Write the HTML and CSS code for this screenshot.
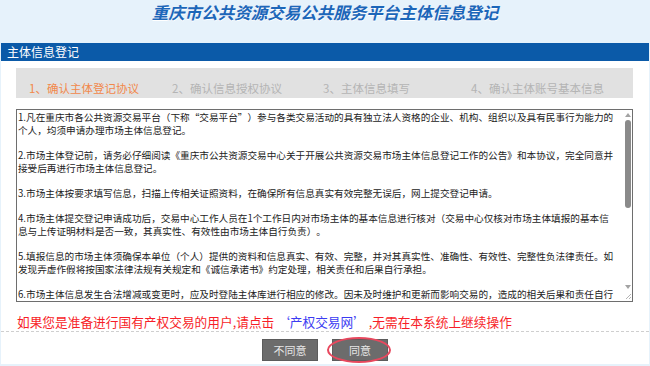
FILE: index.html
```html
<!DOCTYPE html>
<html lang="zh-CN">
  <head>
    <meta charset="UTF-8" />
    <meta name="viewport" content="width=device-width, initial-scale=1.0" />
    <title>主体信息登记</title>
    <link rel="stylesheet" href="styles.css">
  </head>
  <body>
    <div class="top">
      <h1 class="title">重庆市公共资源交易公共服务平台主体信息登记</h1>
    </div>
    <div class="panel">
      <div class="panel-head">主体信息登记</div>
      <div class="panel-body">
        <ul class="steps">
          <li class="active">1、确认主体登记协议</li>
          <li>2、确认信息授权协议</li>
          <li>3、主体信息填写</li>
          <li>4、确认主体账号基本信息</li>
        </ul>
        <div class="textbox">
          <div class="text">
            <p>1.凡在重庆市各公共资源交易平台（下称“交易平台”）参与各类交易活动的具有独立法人资格的企业、机构、组织以及具有民事行为能力的个人，均须申请办理市场主体信息登记。</p>
            <p>2.市场主体登记前，请务必仔细阅读《重庆市公共资源交易中心关于开展公共资源交易市场主体信息登记工作的公告》和本协议，完全同意并接受后再进行市场主体信息登记。</p>
            <p>3.市场主体按要求填写信息，扫描上传相关证照资料，在确保所有信息真实有效完整无误后，网上提交登记申请。</p>
            <p>4.市场主体提交登记申请成功后，交易中心工作人员在1个工作日内对市场主体的基本信息进行核对（交易中心仅核对市场主体填报的基本信息与上传证明材料是否一致，其真实性、有效性由市场主体自行负责）。</p>
            <p>5.填报信息的市场主体须确保本单位（个人）提供的资料和信息真实、有效、完整，并对其真实性、准确性、有效性、完整性负法律责任。如发现弄虚作假将按国家法律法规有关规定和《诚信承诺书》约定处理，相关责任和后果自行承担。</p>
            <p>6.市场主体信息发生合法增减或变更时，应及时登陆主体库进行相应的修改。因未及时维护和更新而影响交易的，造成的相关后果和责任自行承担。</p>
            <p>7.本协议自市场主体确认同意之日起生效。</p>
          </div>
          <div class="sb">
            <span class="sb-up"></span>
            <span class="sb-thumb"></span>
            <span class="sb-fill"></span>
            <span class="sb-down"></span>
            <svg class="grip" width="7" height="7" viewBox="0 0 7 7">
              <path d="M6 1 L1 6 M6 4 L4 6" stroke="#b4b4b4" stroke-width="1" fill="none" />
            </svg>
          </div>
        </div>
        <p class="notice">如果您是准备进行国有产权交易的用户,请点击 <a class="link" href="#">‘产权交易网’</a> ,无需在本系统上继续操作</p>
      </div>
      <div class="actions">
        <button class="btn" type="button">不同意</button>
        <button class="btn btn-ok" type="button">同意</button>
      </div>
    </div>
  </body>
</html>
```

FILE: styles.css
```css
body {
  margin: 0;
  background: #e6f2fb;
  font-family: "Noto Sans CJK SC", "Liberation Sans", sans-serif;
}
.top {
  height: 43px;
  text-align: center;
}
.title {
  margin: 0;
  padding-top: 1px;
  font-size: 16.5px;
  line-height: 22px;
  font-weight: bold;
  font-style: italic;
  color: #1c66b9;
  text-shadow: 0 1px 0 #fff;
}
.panel {
  margin: 0 1px;
  background: #fff;
}
.panel-head {
  height: 18px;
  line-height: 18px;
  padding-left: 6px;
  font-size: 12px;
  color: #fff;
  background: #0b5aa8;
}
.panel-body {
  padding: 7px 16px 0 15px;
}
.steps {
  display: grid;
  grid-template-columns: 143px 151px 148px auto;
  height: 30px;
  margin: 0;
  padding: 13px 0 0 13px;
  box-sizing: border-box;
  list-style: none;
  background: #e1e1e1;
  font-size: 11.5px;
  line-height: 14px;
  color: #b4b4b4;
}
.steps .active {
  color: #f2884a;
}
.textbox {
  display: flex;
  height: 193px;
  margin-top: 11px;
  box-sizing: border-box;
  border: 1px solid #6e6e6e;
}
.text {
  flex: 1;
  overflow: hidden;
  padding: 1px 8px 0 1px;
  font-size: 9.65px;
  line-height: 12.65px;
  color: #222;
  text-spacing-trim: space-all;
}
.text p {
  margin: 0 0 12.65px;
}
.sb {
  display: flex;
  flex-direction: column;
  align-items: center;
  width: 9px;
  padding: 3px 0 0;
}
.sb-up,
.sb-down {
  width: 0;
  height: 0;
  border-left: 3px solid transparent;
  border-right: 3px solid transparent;
}
.sb-up {
  border-bottom: 4px solid #a3a3a3;
}
.sb-down {
  border-top: 4px solid #a3a3a3;
}
.sb-thumb {
  width: 6px;
  height: 88px;
  margin-top: 3px;
  border-radius: 3px;
  background: #8a8a8a;
}
.sb-fill {
  flex: 1;
}
.grip {
  display: block;
  margin: 4px 0 1px 2px;
}
.notice {
  margin: 11px 0 0 1px;
  font-size: 12.7px;
  line-height: 18px;
  color: #f71e28;
}
.link {
  color: #3b3bf2;
  text-decoration: none;
}
.actions {
  display: flex;
  justify-content: center;
  gap: 14px;
  padding: 7px 0 3px;
  border-top: 1px dashed #cfcfcf;
}
.btn {
  width: 56px;
  height: 22px;
  padding: 0;
  font-family: inherit;
  font-size: 11px;
  color: #e6e6e6;
  background: #6c6c6c;
  border: 1px solid #5c5c5c;
}
.btn-ok {
  position: relative;
}
.btn-ok::after {
  content: "";
  position: absolute;
  top: -3px;
  bottom: -3px;
  left: -6px;
  right: -4px;
  border: 2px solid #e8485e;
  border-radius: 50%;
}
```
